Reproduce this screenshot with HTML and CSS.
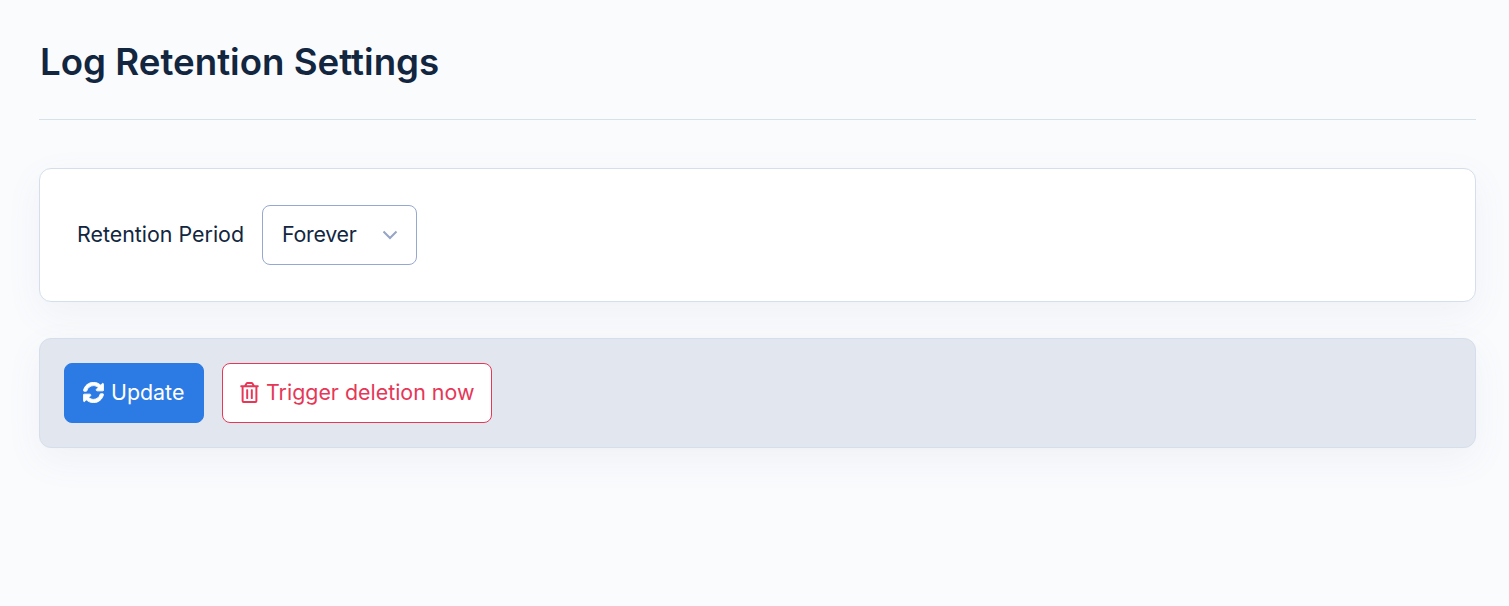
FILE: index.html
```html
<!DOCTYPE html>
<html lang="en">
<head>
    <meta charset="UTF-8">
    <meta name="viewport" content="width=device-width, initial-scale=1.0">
    <title>Log Retention Settings</title>
    <link rel="stylesheet" href="styles.css">
</head>
<body>
    <div class="page">
        <h1 class="page-title">Log Retention Settings</h1>
        <div class="divider"></div>

        <div class="card">
            <label class="field-label" for="retention">Retention Period</label>
            <div class="select-box" id="retention">
                <span class="select-value">Forever</span>
                <svg class="chevron" viewBox="0 0 16 16"><path d="M1.5 4.5 8 11l6.5-6.5"/></svg>
            </div>
        </div>

        <div class="actions">
            <button class="btn btn-primary">
                <svg class="icon icon-sync" viewBox="0 0 512 512"><path d="M370.72 133.28C339.458 104.008 298.888 87.962 255.848 88c-77.458.068-144.328 53.178-162.791 126.85-1.344 5.363-6.122 9.15-11.651 9.15H24.103c-7.498 0-13.194-6.807-11.807-14.176C33.933 94.924 134.813 8 256 8c66.448 0 126.791 26.136 171.315 68.685L463.03 40.97C478.149 25.851 504 36.559 504 57.941V192c0 13.255-10.745 24-24 24H345.941c-21.382 0-32.09-25.851-16.971-40.971l41.75-41.749zM32 296h134.059c21.382 0 32.09 25.851 16.971 40.971l-41.75 41.75c31.262 29.273 71.835 45.319 114.876 45.28 77.418-.07 144.315-53.144 162.787-126.849 1.344-5.363 6.122-9.15 11.651-9.15h57.304c7.498 0 13.194 6.807 11.807 14.176C478.067 417.076 377.187 504 256 504c-66.448 0-126.791-26.136-171.315-68.685L48.97 471.03C33.851 486.149 8 475.441 8 454.059V320c0-13.255 10.745-24 24-24z"/></svg>
                Update
            </button>
            <button class="btn btn-danger">
                <svg class="icon icon-trash" viewBox="0 0 448 512"><path d="M268 416h24a12 12 0 0 0 12-12V188a12 12 0 0 0-12-12h-24a12 12 0 0 0-12 12v216a12 12 0 0 0 12 12zM432 80h-82.41l-34-56.7A48 48 0 0 0 274.41 0H173.59a48 48 0 0 0-41.16 23.3L98.41 80H16A16 16 0 0 0 0 96v16a16 16 0 0 0 16 16h16v336a48 48 0 0 0 48 48h288a48 48 0 0 0 48-48V128h16a16 16 0 0 0 16-16V96a16 16 0 0 0-16-16zM171.84 50.91A6 6 0 0 1 177 48h94a6 6 0 0 1 5.15 2.91L293.61 80H154.39zM368 464H80V128h288zm-212-48h24a12 12 0 0 0 12-12V188a12 12 0 0 0-12-12h-24a12 12 0 0 0-12 12v216a12 12 0 0 0 12 12z"/></svg>
                Trigger deletion now
            </button>
        </div>
    </div>
</body>
</html>
```

FILE: styles.css
```css
* {
    margin: 0;
    padding: 0;
    box-sizing: border-box;
}

body {
    font-family: Inter, "Noto Sans", sans-serif;
    font-size: 21.4px;
    background-color: #fafbfd;
    color: #12263f;
    overflow: hidden;
}

.page {
    padding: 0 33px 0 39px;
    height: 606px;
}

.page-title {
    font-size: 36.7px;
    font-weight: 600;
    line-height: 44px;
    padding: 40px 0 0 1px;
    height: 119px;
}

.divider {
    height: 1px;
    background-color: #d8e0ea;
}

.card {
    display: flex;
    align-items: center;
    gap: 18px;
    height: 134px;
    margin-top: 48px;
    padding: 0 37px;
    background-color: #fff;
    border: 1px solid #d5dfec;
    border-radius: 12px;
    box-shadow: 0 12px 36px rgba(100, 116, 160, 0.07);
}

.field-label {
    padding-bottom: 2px;
}

.select-box {
    display: flex;
    align-items: center;
    justify-content: space-between;
    width: 155px;
    height: 60px;
    padding: 0 18px 2px 19px;
    border: 1px solid #95a8d0;
    border-radius: 8px;
}

.select-value {
    letter-spacing: -0.3px;
}

.chevron {
    width: 16px;
    height: 16px;
    margin-top: 2px;
    fill: none;
    stroke: #96a5c4;
    stroke-width: 2;
}

.actions {
    display: flex;
    align-items: center;
    gap: 18px;
    height: 110px;
    margin-top: 36px;
    padding: 0 24px;
    background-color: #e2e6ee;
    border: 1px solid #d5dfec;
    border-radius: 12px;
    box-shadow: 0 12px 36px rgba(100, 116, 160, 0.07);
}

.btn {
    display: flex;
    align-items: center;
    gap: 7px;
    height: 60px;
    padding-bottom: 2px;
    font-family: inherit;
    font-size: 21.4px;
    border-radius: 8px;
    cursor: pointer;
}

.btn-primary {
    width: 140px;
    padding-left: 18px;
    background-color: #2c7be5;
    color: #fff;
    border: 1px solid #2c7be5;
}

.btn-danger {
    width: 270px;
    padding-left: 17px;
    background-color: #fff;
    color: #e63757;
    border: 1px solid #e63757;
}

.icon {
    height: 21px;
    fill: currentColor;
}

.icon-sync {
    width: 21px;
    stroke: currentColor;
    stroke-width: 22;
}

.icon-trash {
    width: 19px;
}
```
